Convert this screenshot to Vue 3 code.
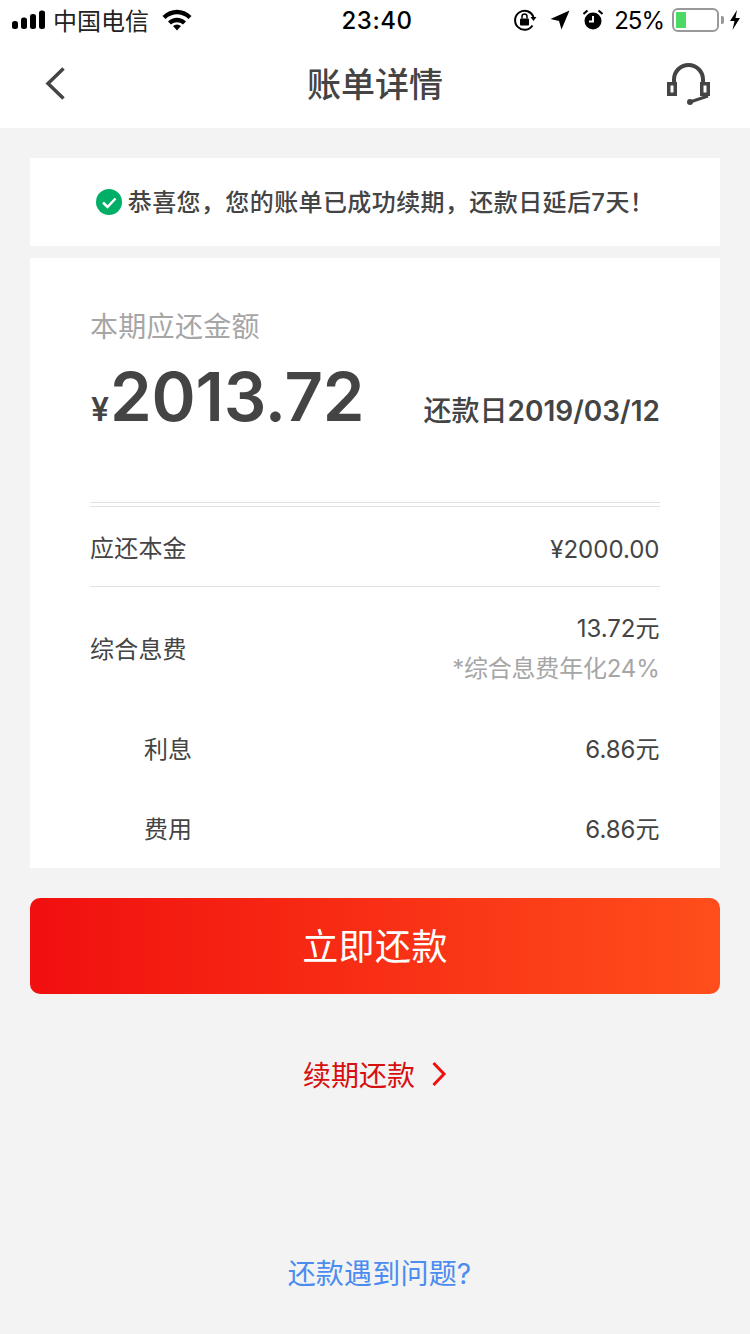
<script setup>
const rows = [
  { label: '利息', value: '6.86元' },
  { label: '费用', value: '6.86元' },
]
</script>

<template>
  <div class="page">
    <div class="top">
      <div class="status">
        <div class="status-left">
          <svg class="signal" width="34" height="20" viewBox="0 0 34 20">
            <rect x="0" y="11" width="6" height="8" rx="2.500" />
            <rect x="9" y="7.500" width="6" height="11.500" rx="2.500" />
            <rect x="18" y="4" width="6" height="15" rx="2.500" />
            <rect x="27" y="0.500" width="6" height="18.500" rx="2.500" />
          </svg>
          <span class="carrier">中国电信</span>
          <svg class="wifi" width="30" height="22" viewBox="0 0 30 22">
            <path d="M0.500 7 C9 -1.500 21 -1.500 29.500 7 L26.500 10 C19.500 3.800 10.500 3.800 3.500 10 Z" />
            <path d="M6 12.500 C11.500 7.500 18.500 7.500 24 12.500 L21 15.500 C17.300 12.500 12.700 12.500 9 15.500 Z" />
            <path d="M11 17 C13.500 15 16.500 15 19 17 L15 21.500 Z" />
          </svg>
        </div>
        <div class="time">23:40</div>
        <div class="status-right">
          <svg width="24" height="24" viewBox="0 0 24 24" class="ic-lock">
            <path d="M20.500 9 A9.500 9.500 0 1 0 19.500 17.500" fill="none" stroke="#000" stroke-width="2" />
            <path d="M17.500 9 H23.500 L20.500 13 Z" />
            <rect x="7" y="10.500" width="9" height="7" rx="1" />
            <path d="M9 10.500 V8.500 A2.500 2.500 0 0 1 14 8.500 V10.500" fill="none" stroke="#000" stroke-width="1.500" />
          </svg>
          <svg width="20" height="20" viewBox="0 0 20 20" class="ic-loc">
            <path d="M19.500 0.500 L11.500 19.500 L9 11 L0.500 9 Z" />
          </svg>
          <svg width="20" height="22" viewBox="0 0 20 22" class="ic-alarm">
            <circle cx="10" cy="12" r="8.500" />
            <path d="M10 7 V12.500 H6" fill="none" stroke="#fff" stroke-width="2" />
            <path d="M0.500 5 L4.500 1.500 M19.500 5 L15.500 1.500" stroke="#000" stroke-width="2" />
          </svg>
          <span class="pct">25%</span>
          <div class="battery"><div class="battery-fill"></div></div>
          <div class="battery-cap"></div>
          <svg width="12" height="20" viewBox="0 0 12 20" class="ic-bolt">
            <path d="M8 0 L1 11 H5.500 L3.500 20 L11 8 H6.500 Z" />
          </svg>
        </div>
      </div>
      <div class="nav">
        <svg class="back" width="24" height="36" viewBox="0 0 24 36">
          <path d="M20.500 2.500 L5 17.500 L20.500 32.500" fill="none" stroke="#444" stroke-width="3.500" />
        </svg>
        <div class="title">账单详情</div>
        <svg class="service" width="44" height="42" viewBox="0 0 44 42">
          <path d="M8 19 V16.500 A14.500 14.500 0 0 1 37 16.500 V19" fill="none" stroke="#444" stroke-width="4" />
          <rect x="2.750" y="20.750" width="6.500" height="10.500" fill="none" stroke="#444" stroke-width="3.500" />
          <rect x="35.750" y="20.750" width="6.500" height="10.500" fill="none" stroke="#444" stroke-width="3.500" />
          <path d="M42 33 L24 39" fill="none" stroke="#444" stroke-width="3" />
          <circle cx="24" cy="39" r="3" fill="#444" />
        </svg>
      </div>
    </div>

    <div class="banner">
      <svg width="26" height="26" viewBox="0 0 26 26">
        <circle cx="13" cy="13" r="13" fill="#00ae66" />
        <path d="M7 13.500 L11.500 18 L19.500 9.500" fill="none" stroke="#fff" stroke-width="2.500" />
      </svg>
      <span class="banner-text">恭喜您，您的账单已成功续期，还款日延后7天！</span>
    </div>

    <div class="card">
      <div class="summary">
        <div class="summary-label">本期应还金额</div>
        <div class="summary-main">
          <div class="amount"><span class="yen">¥</span><span class="num">2013.72</span></div>
          <div class="due">还款日<b>2019/03/12</b></div>
        </div>
      </div>
      <div class="row principal">
        <span class="principal-label">应还本金</span>
        <span class="principal-value">¥2000.00</span>
      </div>
      <div class="row fee">
        <span class="fee-label">综合息费</span>
        <div class="fee-right">
          <div>13.72元</div>
          <div class="fee-note">*综合息费年化24%</div>
        </div>
      </div>
      <div v-for="r in rows" :key="r.label" class="row sub">
        <span>{{ r.label }}</span>
        <span>{{ r.value }}</span>
      </div>
    </div>

    <div class="pay">立即还款</div>

    <div class="renew">
      <span>续期还款</span>
      <svg width="16" height="26" viewBox="0 0 16 26">
        <path d="M2.500 2 L13 13 L2.500 24" fill="none" stroke="#f0100f" stroke-width="3" />
      </svg>
    </div>

    <div class="help">还款遇到问题?</div>
  </div>
</template>

<style>
html, body { margin: 0; background: #f3f3f3; }
</style>

<style scoped>
.page {
  width: 750px;
  height: 1334px;
  overflow: hidden;
  background: #f3f3f3;
  font-family: Inter, "Noto Sans CJK SC", sans-serif;
  color: #444;
  display: flex;
  flex-direction: column;
}
.top { background: #fff; height: 128px; }
.status {
  height: 40px;
  display: flex;
  align-items: center;
  justify-content: space-between;
  padding: 0 9px 0 12px;
  position: relative;
  color: #000;
}
svg { display: block; flex: none; }
.status svg { fill: #000; }
.status-left, .status-right { display: flex; align-items: center; }
.carrier { font-size: 24px; margin-left: 7px; color: #222; padding-bottom: 2px; }
.wifi { margin-left: 13px; }
.time {
  position: absolute;
  left: 4px;
  right: 0;
  text-align: center;
  font-size: 24px;
  font-weight: 500;
  letter-spacing: 0.5px;
  padding-top: 1px;
}
.ic-lock { margin-right: 13px; }
.ic-loc { margin-right: 13px; }
.ic-alarm { margin-right: 11px; }
.pct { font-size: 24px; margin-right: 8px; letter-spacing: -1px; }
.battery {
  width: 47px;
  height: 24px;
  border: 2px solid #999;
  border-radius: 6px;
  padding: 2px;
  box-sizing: border-box;
}
.battery-fill { width: 10px; height: 100%; background: #4cd964; }
.battery-cap {
  width: 3px;
  height: 8px;
  background: #999;
  margin: 0 5px 0 2px;
  border-radius: 0 2px 2px 0;
}
.nav {
  height: 88px;
  display: flex;
  align-items: center;
  justify-content: space-between;
  padding: 0 40px 0 43px;
  position: relative;
}
.title {
  position: absolute;
  left: 0;
  right: 0;
  text-align: center;
  font-size: 34px;
  color: #444;
  font-weight: 500;
  padding-bottom: 4px;
}
.banner {
  margin: 30px 30px 0;
  height: 88px;
  background: #fff;
  display: flex;
  align-items: center;
  justify-content: center;
  gap: 6px;
}
.banner-text { font-size: 24px; font-weight: 500; color: #444; letter-spacing: 0.4px; padding-bottom: 4px; }
.card {
  margin: 12px 30px 0;
  height: 610px;
  background: #fff;
  padding: 0 60px;
  box-sizing: border-box;
  overflow: hidden;
}
.summary { height: 245px; border-bottom: 1px solid #e2e2e2; box-sizing: border-box; padding-top: 49px; }
.summary-label { font-size: 28px; color: #a6a6a6; line-height: 40px; letter-spacing: 0.3px; }
.summary-main {
  display: flex;
  justify-content: space-between;
  align-items: baseline;
  margin-top: 10px;
}
.amount { color: #444; font-weight: 600; }
.yen { font-size: 32px; padding-right: 1px; padding-left: 1px; }
.num { font-size: 67px; letter-spacing: -0.2px; line-height: 80px; }
.due { font-size: 28px; color: #444; font-weight: 500; }
.due b { font-weight: 600; font-size: 28px; }
.row {
  display: flex;
  justify-content: space-between;
  align-items: center;
  font-size: 24px;
  color: #444;
  height: 80px;
  padding-right: 0.5px;
  box-sizing: border-box;
}
.principal {
  border-top: 1px solid #e2e2e2;
  border-bottom: 1px solid #e2e2e2;
  margin-top: 3px;
  height: 81px;
}
.principal-label { padding-bottom: 2px; padding-top: 2px; letter-spacing: 0.2px; }
.principal-value { padding-top: 6px; }
.fee { height: 124px; }
.fee-label { padding-bottom: 4px; letter-spacing: 0.2px; }
.fee-right { text-align: right; line-height: 40px; }
.fee-note { color: #a6a6a6; letter-spacing: -0.2px; }
.sub { padding-left: 54px; padding-bottom: 8px; }
.pay {
  margin: 30px 30px 0;
  height: 96px;
  border-radius: 10px;
  background: linear-gradient(90deg, #f10f0f, #ff4e1b);
  color: #fff;
  font-size: 36px;
  line-height: 98px;
  text-align: center;
  letter-spacing: 0.4px;
}
.renew {
  margin-top: 56px;
  height: 48px;
  display: flex;
  align-items: center;
  justify-content: center;
  gap: 16px;
  color: #d80f0f;
  font-size: 28px;
}
.help {
  margin-top: 152px;
  height: 48px;
  line-height: 48px;
  text-align: center;
  color: #4a8cf0;
  font-size: 28px;
  padding-left: 9px;
  letter-spacing: 0.2px;
}
</style>
